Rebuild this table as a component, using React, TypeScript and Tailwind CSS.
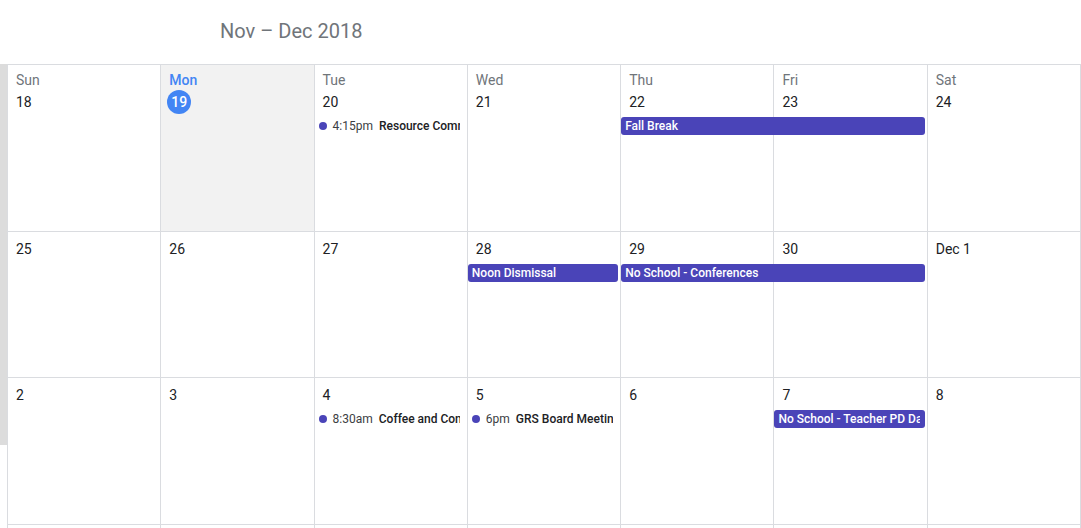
import React from "react";

type Timed = { kind: "timed"; col: number; time: string; title: string };
type Bar = { kind: "bar"; col: number; span: number; title: string };
type Ev = Timed | Bar;

type Week = {
  days: string[];
  header?: boolean;
  height: string;
  rows: string;
  events: Ev[];
};

const DAY_NAMES = ["Sun", "Mon", "Tue", "Wed", "Thu", "Fri", "Sat"];

const colStart = ["col-start-1", "col-start-2", "col-start-3", "col-start-4", "col-start-5", "col-start-6", "col-start-7"];
const colSpan = ["col-span-1", "col-span-1", "col-span-2", "col-span-3"];

const weeks: Week[] = [
  {
    days: ["18", "19", "20", "21", "22", "23", "24"],
    header: true,
    height: "h-[167px]",
    rows: "grid-rows-[52px_18px_1fr]",
    events: [
      { kind: "timed", col: 2, time: "4:15pm", title: "Resource Committee" },
      { kind: "bar", col: 4, span: 2, title: "Fall Break" },
    ],
  },
  {
    days: ["25", "26", "27", "28", "29", "30", "Dec 1"],
    height: "h-[146px]",
    rows: "grid-rows-[32px_18px_1fr]",
    events: [
      { kind: "bar", col: 3, span: 1, title: "Noon Dismissal" },
      { kind: "bar", col: 4, span: 2, title: "No School - Conferences" },
    ],
  },
  {
    days: ["2", "3", "4", "5", "6", "7", "8"],
    height: "h-[147px]",
    rows: "grid-rows-[32px_18px_1fr]",
    events: [
      { kind: "timed", col: 2, time: "8:30am", title: "Coffee and Conversation" },
      { kind: "timed", col: 3, time: "6pm", title: "GRS Board Meeting" },
      { kind: "bar", col: 5, span: 1, title: "No School - Teacher PD Day" },
    ],
  },
  {
    days: ["9", "10", "11", "12", "13", "14", "15"],
    height: "h-[146px]",
    rows: "grid-rows-[32px_18px_1fr]",
    events: [],
  },
];

function WeekRow({ week }: { week: Week }) {
  return (
    <div className={`grid grid-cols-7 ${week.rows} ${week.height}`}>
      {week.days.map((d, i) => {
        const today = week.header && i === 1;
        return (
          <div
            key={i}
            className={`${colStart[i]} row-start-1 row-end-4 border-r border-b border-[#dadce0] px-[8px] pt-[5px] ${
              today ? "bg-[#f2f2f2]" : "bg-white"
            }`}
          >
            {week.header && (
              <div
                className={`h-[20px] leading-[20px] text-[14px] ${
                  today ? "text-[#4285f4] font-medium" : "text-[#70757a]"
                }`}
              >
                {DAY_NAMES[i]}
              </div>
            )}
            <div className="h-[24px] flex items-center text-[14px] text-[#202124]">
              {today ? (
                <span className="w-[24px] h-[24px] rounded-full bg-[#4285f4] text-white font-medium flex items-center justify-center -ml-[2px]">
                  {d}
                </span>
              ) : (
                <span>{d}</span>
              )}
            </div>
          </div>
        );
      })}
      {week.events.map((ev, k) =>
        ev.kind === "bar" ? (
          <div
            key={k}
            className={`${colStart[ev.col]} ${colSpan[ev.span]} row-start-2 mr-[3px] h-[18px] rounded-[3px] bg-[#4a44b8] text-white text-[12px] font-medium leading-[18px] pl-[4px] pr-[5px] z-10`}
          >
            <div className="overflow-hidden whitespace-nowrap">{ev.title}</div>
          </div>
        ) : (
          <div
            key={k}
            className={`${colStart[ev.col]} row-start-2 ml-[4px] mr-[8px] h-[18px] flex items-center gap-[6px] overflow-hidden whitespace-nowrap text-[12px] z-10`}
          >
            <span className="w-[8px] h-[8px] rounded-full bg-[#4a44b8] shrink-0" />
            <span className="text-[#3c4043] shrink-0">{ev.time}</span>
            <span className="text-[#202124] font-medium">{ev.title}</span>
          </div>
        )
      )}
    </div>
  );
}

export default function App() {
  return (
    <div
      className="w-full h-[528px] overflow-hidden bg-white"
      style={{ fontFamily: "Roboto, 'Noto Sans', 'Liberation Sans', sans-serif" }}
    >
      <div className="h-[64px] flex items-center pl-[220px]">
        <h1 className="text-[20px] text-[#70757a] leading-none -mt-[2px]">Nov – Dec 2018</h1>
      </div>
      <div className="flex">
        <div className="w-[7px] h-[381px] bg-[#dcdcdc] shrink-0" />
        <div className="flex-1 border-l border-t border-[#dadce0] flex flex-col">
          {weeks.map((w, i) => (
            <WeekRow key={i} week={w} />
          ))}
        </div>
      </div>
    </div>
  );
}
